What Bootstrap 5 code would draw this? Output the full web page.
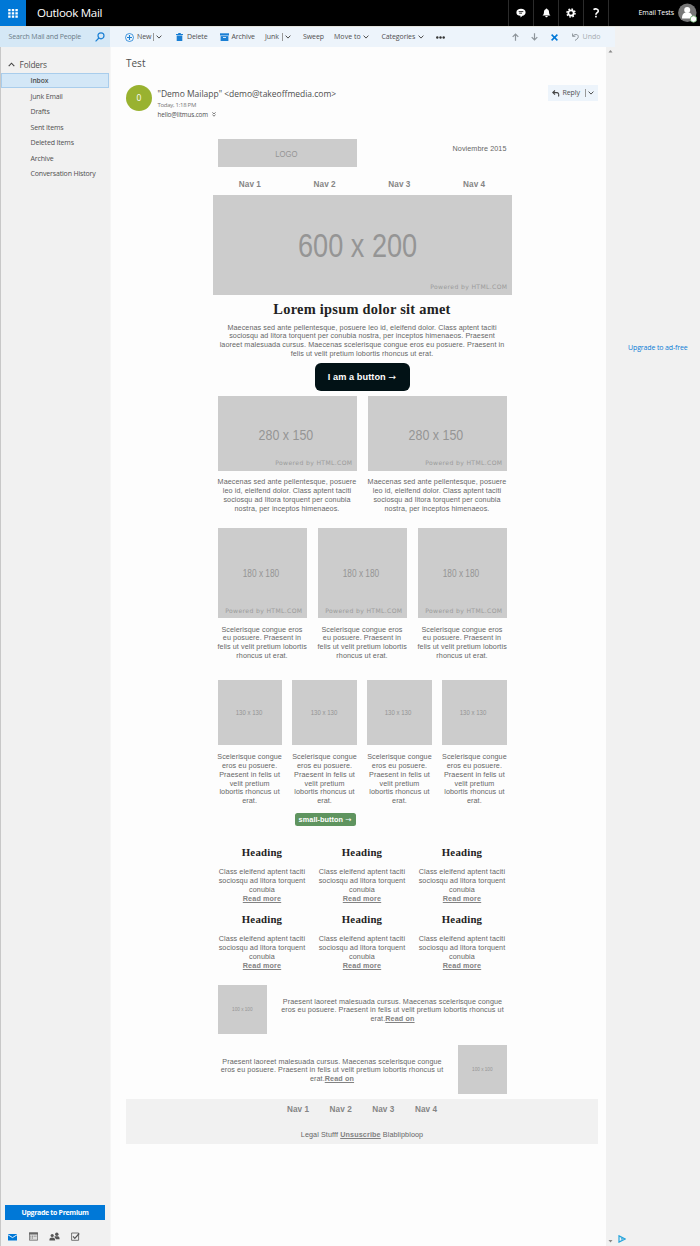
<!DOCTYPE html>
<html lang="en">
<head>
<meta charset="utf-8">
<title>Outlook Mail</title>
<link rel="stylesheet" href="https://cdn.jsdelivr.net/npm/bootstrap@5.3.0/dist/css/bootstrap.min.css">
<style>
body{font:7px/10px "Open Sans",sans-serif;color:#4f4f4f;height:1246px;overflow:hidden;background:#fdfdfd;letter-spacing:-.1px}
svg{display:block;flex:none}
.appbar{height:26px;background:#000;color:#fff}
.waffle{width:26px;background:#0078d7}
.brand{font-size:11.6px;letter-spacing:-.32px;margin-left:11px}
.tool{width:25px;border-left:1px solid #2b2b2b}
.who{width:92px;border-left:1px solid #2b2b2b;padding-right:3px}
.strip{height:21px;border-top:1px solid #e4e4de}
.search{width:110px;background:#d5e8f6;padding:0 5px 0 8.5px;color:#6b7c88;letter-spacing:-.16px}
.cmds{width:505px;background:#edf4fb;padding-left:15px}
.rest,.ads{background:#f1f1f1}
.side{width:111px;background:#f1f1f1;border-left:1px solid #c8c8c8;border-right:1px solid #f6f6f6}
.folders{height:15px;margin-top:10px;padding-left:7px;font-size:8.3px;letter-spacing:-.15px}
.fold{height:15.5px;padding-left:29.5px;letter-spacing:-.16px}
.fold.on{background:#d3e7f7;border:1px solid #a9cdec;margin:1px 1px .8px 0;padding-left:28.5px;font-weight:600;font-size:6.8px;height:15px}
.upg{height:15px;margin:0 5px 0 4px;background:#0078d7;color:#fff;font-weight:700;letter-spacing:-.32px}
.mainpane{width:495px;padding:0 8px 0 15px}
.subj{font-size:10px;line-height:14px;margin-top:9px;letter-spacing:0}
.face{width:26px;height:26px;background:#99b230;color:#fff;font-size:8.5px}
.reply{background:#edf4fb;width:50px;height:16px;padding-left:4px}
.vbar{width:1px;height:8px;background:#999}
.ads{width:94px}
.adlink{color:#0b7cd6;margin-top:290px;margin-left:22px;letter-spacing:-.13px}
.mailbody{width:299px;margin:19px auto 0;font:7.2px/8.8px "Liberation Sans",sans-serif;letter-spacing:.085px;color:#666;text-align:center;white-space:nowrap}
.inner{margin:0 5px}
.ph{background:#ccc;color:#959595;display:flex;align-items:center;justify-content:center;position:relative;letter-spacing:0}
.ph>span{transform:scaleX(.83)}
.ph>small{position:absolute;right:4px;bottom:3.5px;font:6.1px/8px "DejaVu Sans",sans-serif;letter-spacing:.36px;color:#9b9b9b}
.navs{font-weight:700;font-size:8.2px;letter-spacing:.06px;color:#858585}
h1,h2{font-family:"Liberation Serif",serif;font-weight:700;color:#222;margin:0}
h1{font-size:14.4px;line-height:16px;letter-spacing:.26px}
h2{font-size:10.8px;line-height:12px;letter-spacing:.21px}
.cta{width:95px;height:28px;border-radius:6px;background:#021216;color:#fff;font:700 9.2px/28px "Liberation Sans",sans-serif;letter-spacing:.06px;margin:4px auto 0}
.cta2{width:61px;height:13.5px;border-radius:2.5px;background:#5f945f;color:#fff;font:700 7.3px/13px "Liberation Sans",sans-serif;letter-spacing:.06px;margin:7px 0 0 82px}
.arrow{font-family:"DejaVu Sans",sans-serif;font-weight:400;line-height:1}
.g2,.g3,.g4{display:grid;column-gap:11px}
.g2{grid-template-columns:repeat(2,minmax(0,1fr))}.g3{grid-template-columns:repeat(3,minmax(0,1fr))}.g4{grid-template-columns:repeat(4,minmax(0,1fr));column-gap:10.7px}
.g4 .cap{margin:0 -2px}
.mailbody a,.foot a{color:#828282;font-weight:700;text-decoration:underline;letter-spacing:.14px}
.foot{background:#f1f1f1;height:45px;margin-top:5px;font:7.2px/9px "Liberation Sans",sans-serif;letter-spacing:.1px;color:#666;text-align:center}
</style>
</head>
<body class="d-flex flex-column">
<svg width="0" height="0" class="position-absolute"><defs>
<symbol id="chev" viewBox="0 0 6 4"><path d="M.6.6 3 3.1 5.4.6" fill="none" stroke="currentColor" stroke-width="1"/></symbol>
</defs></svg>

<header class="appbar d-flex align-items-stretch flex-shrink-0">
  <div class="waffle d-flex align-items-center justify-content-center">
    <svg width="10" height="9" fill="#fff"><path d="M.2 0h2.4v2.2H.2zM3.8 0h2.4v2.2H3.8zM7.4 0h2.4v2.2H7.4zM.2 3.3h2.4v2.2H.2zM3.8 3.3h2.4v2.2H3.8zM7.4 3.3h2.4v2.2H7.4zM.2 6.6h2.4v2.2H.2zM3.8 6.6h2.4v2.2H3.8zM7.4 6.6h2.4v2.2H7.4z"/></svg>
  </div>
  <div class="brand align-self-center">Outlook Mail</div>
  <div class="d-flex ms-auto">
    <div class="tool d-flex align-items-center justify-content-center"><svg width="10" height="10"><path d="M5 .8C7.6.8 9.6 2 9.6 4.4 9.6 6.500 8 7.500 6.500 7.700L4.500 9.600V7.800C2 7.700.400 6.500.400 4.400.400 2 2.400.800 5 .800z" fill="#fff"/><path d="M2.700 3.600h4.600M3.200 5.200h2.800" stroke="#000" stroke-width=".8"/></svg></div>
    <div class="tool d-flex align-items-center justify-content-center"><svg width="9" height="10" fill="#fff"><path d="M4.500.500c.5 0 .8.300.8.800C6.800 1.700 7 3 7.100 4.700 7.200 6.300 7.800 6.800 8.500 7.500H.500C1.200 6.800 1.800 6.300 1.900 4.700 2 3 2.200 1.700 3.700 1.300c0-.5.300-.8.800-.8zM3.300 8h2.400c0 .8-.5 1.300-1.200 1.300S3.300 8.800 3.300 8z"/></svg></div>
    <div class="tool d-flex align-items-center justify-content-center"><svg width="10" height="10" fill="none" stroke="#fff"><circle cx="5" cy="5" r="2.700" stroke-width="1.800"/><circle cx="5" cy="5" r="4" stroke-width="1.500" stroke-dasharray="1.600 1.540"/></svg></div>
    <div class="tool d-flex align-items-center justify-content-center"><svg width="8" height="10"><path d="M1.500 1.700C3.200.300 6.300.800 6.300 3 6.300 4.800 3.900 4.700 3.900 6.800" fill="none" stroke="#fff" stroke-width="1.600"/><rect x="3.100" y="7.800" width="1.700" height="1.600" fill="#fff"/></svg></div>
    <div class="who d-flex align-items-center justify-content-end gap-1"><span>Email Tests</span>
      <svg width="19" height="20"><circle cx="9.300" cy="9.800" r="9.200" fill="#777"/><circle cx="9.200" cy="7" r="3" fill="#fff"/><path d="M4 15.500c0-5 2-6 5.200-6s5.200 1 5.200 6z" fill="#fff"/><circle cx="15.500" cy="16" r="3.200" fill="#fff" stroke="#64a864" stroke-width=".8"/></svg></div>
  </div>
</header>

<div class="strip d-flex align-items-stretch flex-shrink-0">
  <div class="search d-flex align-items-center justify-content-between"><span>Search Mail and People</span>
    <svg width="10" height="10" fill="none" stroke="#1a7fd4" stroke-width="1.200"><circle cx="6" cy="3.800" r="3"/><path d="M3.900 6 .600 9.400"/></svg></div>
  <div class="cmds d-flex align-items-center">
    <svg width="9" height="9" fill="none" stroke="#1a7fd4" stroke-width=".8"><circle cx="4.500" cy="4.500" r="4"/><path d="M4.500 2v5M2 4.500h5" stroke-width="1.100"/></svg>
    <span style="margin-left:3px;width:16px">New</span><i class="vbar"></i><svg width="6" height="4" style="margin-left:2px"><use href="#chev"/></svg>
    <svg width="7" height="8" style="margin-left:14px" fill="#1a7fd4"><path d="M0 .900h2.200V0h2.600v.900H7v1H0zM.700 2.400h5.600V8H.700z"/></svg>
    <span style="margin-left:4px;width:32.500px">Delete</span>
    <svg width="9" height="8" fill="#1a7fd4"><path d="M0 .300h9v2.200H0z"/><path d="M.600 3.100h7.800V8H.600z"/><path d="M3 4.100h3v.8H3z" fill="#fff"/></svg>
    <span style="margin-left:3px;width:33.500px">Archive</span>
    <span style="width:17px">Junk</span><i class="vbar"></i><svg width="6" height="4" style="margin-left:2px"><use href="#chev"/></svg>
    <span style="margin-left:12px;width:31px">Sweep</span>
    <span style="width:29px;letter-spacing:.06px">Move to</span><svg width="6" height="4"><use href="#chev"/></svg>
    <span style="margin-left:12.500px;width:36px">Categories</span><svg width="6" height="4"><use href="#chev"/></svg>
    <svg width="9" height="3" style="margin-left:12.500px" fill="#333"><circle cx="1.300" cy="1.500" r="1.200"/><circle cx="4.500" cy="1.500" r="1.200"/><circle cx="7.700" cy="1.500" r="1.200"/></svg>
    <svg width="7" height="8" class="ms-auto" fill="none" stroke="#8d949a" stroke-width="1.200"><path d="M3.500 7.700V1M.700 3.800 3.500 1l2.800 2.800"/></svg>
    <svg width="7" height="8" style="margin-left:12px" fill="none" stroke="#8d949a" stroke-width="1.200"><path d="M3.500.300V7M.700 4.200 3.500 7l2.800-2.800"/></svg>
    <svg width="7" height="7" style="margin-left:13px" stroke="#0078d7" stroke-width="1.500"><path d="M.600.600l5.800 5.800M6.400.600.600 6.400"/></svg>
    <svg width="7" height="8" style="margin-left:14px" fill="none" stroke="#8d949a"><path d="M.600.500v2.800h2.800M.800 3.200C2 1 6.300.800 6.300 3.600 6.300 5.800 4.500 6.200 3 7.500"/></svg>
    <span style="margin:0 14.500px 0 4px;color:#a5abb0;letter-spacing:.02px">Undo</span>
  </div>
  <div class="rest flex-fill"></div>
</div>

<div class="d-flex flex-fill">
  <aside class="side d-flex flex-column">
    <div class="folders d-flex align-items-center"><svg width="7" height="5" style="margin-right:4.500px"><path d="M.700 4.200 3.500 1.200l2.800 3" fill="none" stroke="#444" stroke-width="1.100"/></svg>Folders</div>
    <div class="fold on d-flex align-items-center">Inbox</div>
    <div class="fold d-flex align-items-center">Junk Email</div>
    <div class="fold d-flex align-items-center">Drafts</div>
    <div class="fold d-flex align-items-center">Sent Items</div>
    <div class="fold d-flex align-items-center">Deleted Items</div>
    <div class="fold d-flex align-items-center">Archive</div>
    <div class="fold d-flex align-items-center">Conversation History</div>
    <div class="mt-auto upg d-flex align-items-center justify-content-center">Upgrade to Premium</div>
    <div class="d-flex align-items-center" style="height:26px;padding:7px 0 0 7px">
      <svg width="9" height="8"><path d="M0 1h9v6.500H0z" fill="#0078d7"/><path d="M0 1.800 4.500 4.600 9 1.800" fill="none" stroke="#fff" stroke-width=".9"/></svg>
      <svg width="9" height="9" style="margin-left:12px"><path d="M.4.900h8.200v7.300H.400z" fill="#ddd" stroke="#666" stroke-width=".8"/><path d="M0 .500h9v2H0z" fill="#666"/><path d="M1.300 4.200h6.500M1.300 6h3" stroke="#777" stroke-dasharray="1 .7"/></svg>
      <svg width="11" height="9" style="margin-left:11px" fill="#555"><circle cx="7.800" cy="2.200" r="1.700"/><circle cx="3.200" cy="3.500" r="1.600"/><path d="M5.600 4.200h3.600c1 .4 1.400 1.300 1.400 3H7L5.500 5zM.400 8.500C.400 6.200 1 5.500 3.200 5.500S6 6.200 6.200 8.500z"/></svg>
      <svg width="9" height="9" style="margin-left:11px" fill="none" stroke="#555"><path d="M.600 1h7v7.300h-7z" stroke-width=".8"/><path d="M2 4.400l1.800 2L8.200 1.500" stroke-width="1.200"/></svg>
    </div>
  </aside>

  <main class="mainpane">
    <div class="subj">Test</div>
    <div class="d-flex" style="margin-top:15px">
      <div class="face rounded-circle d-flex align-items-center justify-content-center flex-shrink-0">0</div>
      <div style="margin:1.500px 0 0 5.500px">
        <div style="font-size:8.500px;line-height:13px;letter-spacing:-.01px">"Demo Mailapp" &lt;demo@takeoffmedia.com&gt;</div>
        <div style="font-size:6px;line-height:10px;letter-spacing:-.28px;color:#777">Today, 1:18 PM</div>
        <div class="d-flex align-items-center" style="font-size:6.300px;letter-spacing:-.12px">hello@litmus.com<svg width="4" height="5" style="margin-left:3.500px" fill="none" stroke="#555" stroke-width=".8"><path d="M.400.400 2 1.900 3.600.400M.400 2.700 2 4.200 3.600 2.700"/></svg></div>
      </div>
      <div class="reply d-flex align-items-center ms-auto">
        <svg width="8" height="7" fill="none" stroke="#444" stroke-width="1.100"><path d="M3 .500.800 2.600 3 4.700M1 2.600h3.700C6.500 2.600 7.200 4 6.500 6.500"/></svg>
        <span style="margin-left:2.500px;width:22px">Reply</span><i class="vbar"></i><svg width="6" height="4" style="margin-left:2px"><use href="#chev"/></svg>
      </div>
    </div>

    <article class="mailbody">
      <div class="inner d-flex justify-content-between" style="height:28px">
        <div class="ph" style="width:139px;font-size:9.300px;padding-top:3px;padding-right:2px"><span>LOGO</span></div>
        <span style="padding-top:6.500px">Noviembre 2015</span>
      </div>
      <nav class="navs d-flex" style="height:28px;padding-top:14px"><span class="col-3">Nav 1</span><span class="col-3">Nav 2</span><span class="col-3">Nav 3</span><span class="col-3">Nav 4</span></nav>
      <div class="ph" style="height:100px;font-size:33.500px;padding-top:3px;padding-right:8px"><span style="transform:scaleX(.81)">600 x 200</span><small>Powered by HTML.COM</small></div>
      <h1 style="margin-top:6.500px">Lorem ipsum dolor sit amet</h1>
      <div style="margin-top:6.600px">Maecenas sed ante pellentesque, posuere leo id, eleifend dolor. Class aptent taciti<br>sociosqu ad litora torquent per conubia nostra, per inceptos himenaeos. Praesent<br>laoreet malesuada cursus. Maecenas scelerisque congue eros eu posuere. Praesent in<br>felis ut velit pretium lobortis rhoncus ut erat.</div>
      <div class="cta">I am a button <span class="arrow">→</span></div>

      <div class="inner g2" style="margin-top:5.600px" id="two"></div>
      <div class="inner g3" style="margin-top:14.800px" id="three"></div>
      <div class="inner g4" style="margin-top:19.300px" id="four"></div>
      <div class="cta2">small-button <span class="arrow">→</span></div>
      <div class="inner g3" style="margin-top:19.500px;row-gap:9px" id="heads"></div>

      <div class="inner d-flex" style="margin-top:15px">
        <div class="ph flex-shrink-0" style="width:49px;height:49px;font-size:5.600px"><span>100 x 100</span></div>
        <div class="flex-fill" style="padding:12.300px 0 0 12px">Praesent laoreet malesuada cursus. Maecenas scelerisque congue<br>eros eu posuere. Praesent in felis ut velit pretium lobortis rhoncus ut<br>erat.<a href="#">Read on</a></div>
      </div>
      <div class="inner d-flex" style="margin-top:11px">
        <div class="flex-fill" style="padding:12.300px 11px 0 0">Praesent laoreet malesuada cursus. Maecenas scelerisque congue<br>eros eu posuere. Praesent in felis ut velit pretium lobortis rhoncus ut<br>erat.<a href="#">Read on</a></div>
        <div class="ph flex-shrink-0" style="width:49px;height:49px;font-size:5.600px"><span>100 x 100</span></div>
      </div>
    </article>
    <footer class="foot">
      <div class="navs d-flex justify-content-center" style="gap:20.500px;padding-top:6px"><span>Nav 1</span><span>Nav 2</span><span>Nav 3</span><span>Nav 4</span></div>
      <div style="padding-top:16px">Legal Stufff <a href="#">Unsuscribe</a> Blablipbloop</div>
    </footer>
  </main>

  <aside class="ads d-flex flex-column">
    <svg width="5" height="3" style="margin:3px 0 0 2px"><path d="M2.500 0 4.500 2.500h-4z" fill="#888"/></svg>
    <div class="adlink">Upgrade to ad-free</div>
    <div class="mt-auto d-flex align-items-end" style="padding:0 0 3px 2px">
      <svg width="5" height="3"><path d="M.500 0h4l-2 2.500z" fill="#888"/></svg>
      <svg width="8" height="8" style="margin-left:5px" fill="none" stroke="#27a5dc" stroke-width="1.200"><path d="M1 .900 7 4 1 7.100zM3 3.900h1.500"/></svg>
    </div>
  </aside>
</div>

<script>
// Repeated columns of the newsletter
const fill = (id, n, html) => document.getElementById(id).innerHTML = html.repeat(n);
const mark = '<small>Powered by HTML.COM</small>';
fill('two', 2, `<div><div class="ph" style="height:74.500px;font-size:15px;padding:3px 3px 0 0"><span>280 x 150</span>${mark}</div><div style="padding-top:7.300px">Maecenas sed ante pellentesque, posuere<br>leo id, eleifend dolor. Class aptent taciti<br>sociosqu ad litora torquent per conubia<br>nostra, per inceptos himenaeos.</div></div>`);
fill('three', 3, `<div><div class="ph" style="height:90px;font-size:10px;padding:2px 3px 0 0"><span>180 x 180</span>${mark}</div><div style="padding-top:7.500px">Scelerisque congue eros<br>eu posuere. Praesent in<br>felis ut velit pretium lobortis<br>rhoncus ut erat.</div></div>`);
fill('four', 4, `<div><div class="ph" style="height:65px;font-size:7.300px;padding:1px 2px 0 0"><span>130 x 130</span></div><div class="cap" style="padding-top:8px">Scelerisque congue<br>eros eu posuere.<br>Praesent in felis ut<br>velit pretium<br>lobortis rhoncus ut<br>erat.</div></div>`);
fill('heads', 6, `<div><h2>Heading</h2><div style="padding-top:10.500px">Class eleifend aptent taciti<br>sociosqu ad litora torquent<br>conubia<br><a href="#">Read more</a></div></div>`);
</script>
<script src="https://cdn.jsdelivr.net/npm/bootstrap@5.3.0/dist/js/bootstrap.bundle.min.js"></script>
</body>
</html>
